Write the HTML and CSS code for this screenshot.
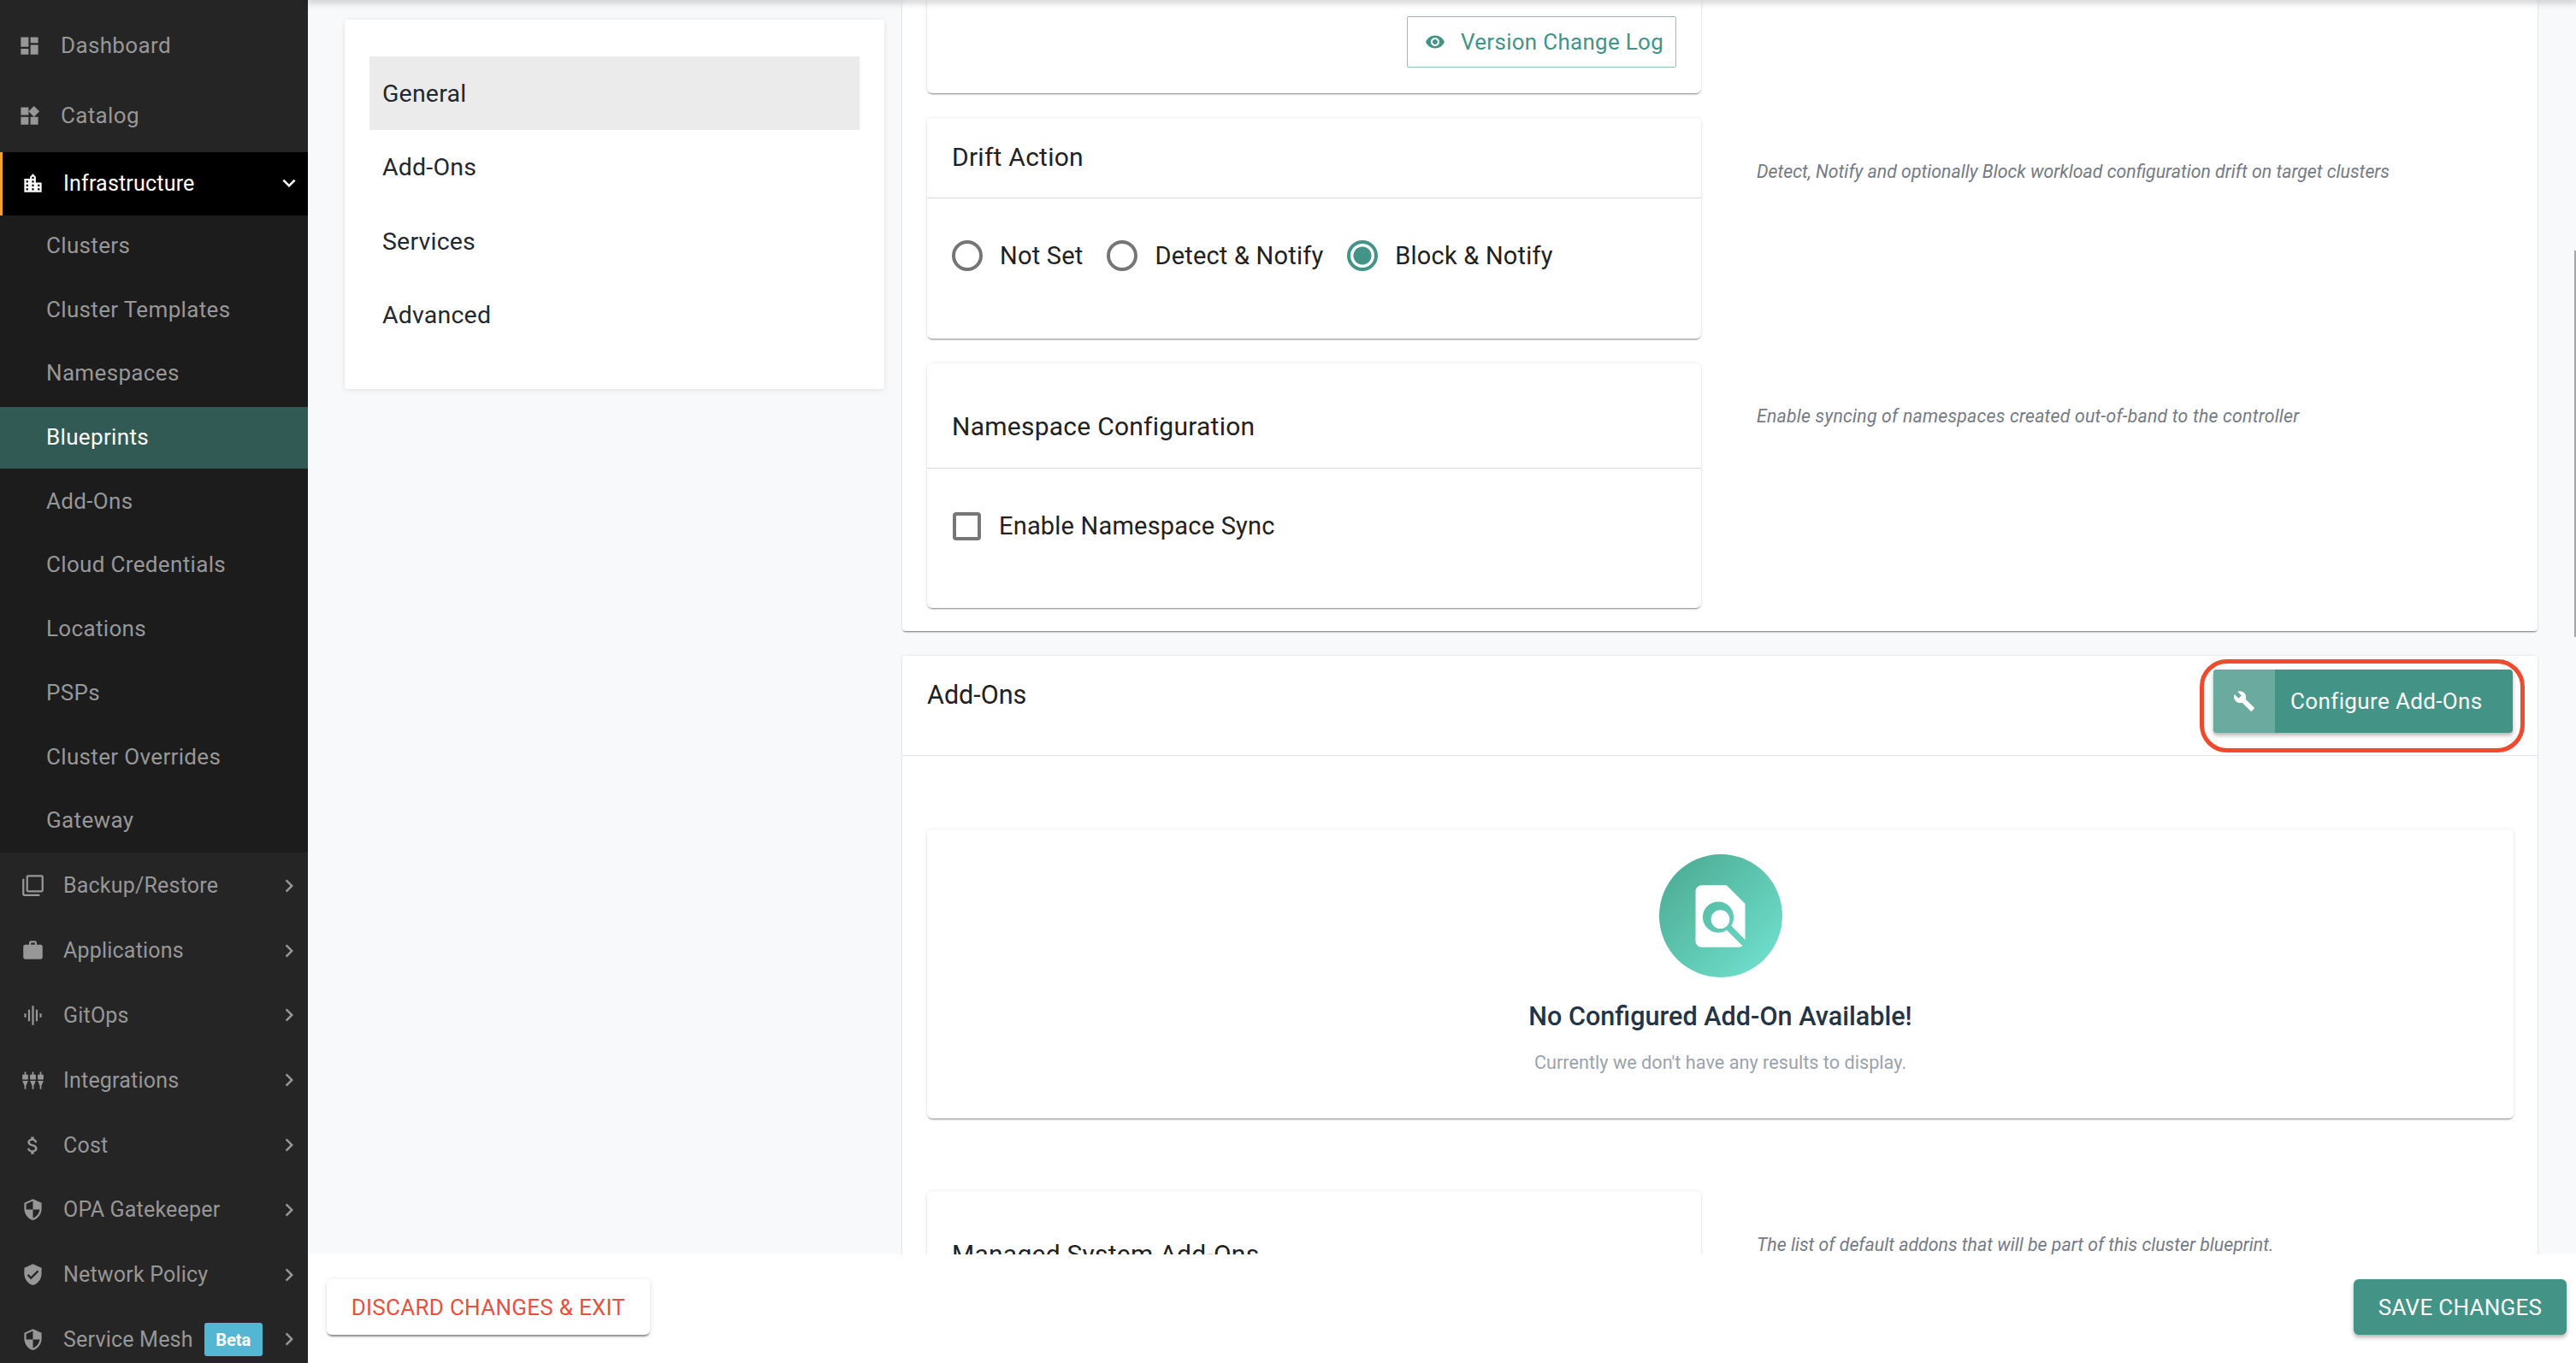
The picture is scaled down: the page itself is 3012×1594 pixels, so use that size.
FILE: index.html
```html
<!DOCTYPE html>
<html>
<head>
    <title>Blueprint Settings</title>
    <link rel="stylesheet" href="styles.css">
</head>
<body>
<svg class="defs">
    <symbol id="chevron-right" viewBox="0 0 24 24"><path d="M10 6L8.59 7.41 13.17 12l-4.58 4.59L10 18l6-6z"/></symbol>
    <symbol id="chevron-down" viewBox="0 0 24 24"><path d="M16.59 8.59L12 13.17 7.41 8.59 6 10l6 6 6-6z"/></symbol>
    <symbol id="shield-half" viewBox="0 0 24 24"><path d="M12 1L3 5v6c0 5.55 3.84 10.74 9 12 5.16-1.26 9-6.45 9-12V5l-9-4zm0 10.99h7c-.53 4.12-3.28 7.79-7 8.94V12H5V6.3l7-3.11v8.8z"/></symbol>
</svg>

<nav class="sidebar">
    <a class="nav-item nav-item-tall nav-item-first">
        <svg class="nav-icon" viewBox="0 0 24 24"><path d="M3 13h8V3H3v10zm0 8h8v-6H3v6zm10 0h8V11h-8v10zm0-18v6h8V3h-8z"/></svg>
        <span>Dashboard</span>
    </a>
    <a class="nav-item nav-item-tall nav-item-first">
        <svg class="nav-icon" viewBox="0 0 24 24"><path d="M13 13v8h8v-8h-8zM3 21h8v-8H3v8zM3 3v8h8V3H3zm13.66-1.31L11 7.34 16.66 13l5.66-5.66-5.66-5.65z"/></svg>
        <span>Catalog</span>
    </a>
    <a class="nav-item nav-item-open">
        <svg class="nav-icon" viewBox="0 0 24 24"><path d="M15 11V5l-3-3-3 3v2H3v14h18V11h-6zm-8 8H5v-2h2v2zm0-4H5v-2h2v2zm0-4H5V9h2v2zm6 8h-2v-2h2v2zm0-4h-2v-2h2v2zm0-4h-2V9h2v2zm0-4h-2V5h2v2zm6 12h-2v-2h2v2zm0-4h-2v-2h2v2z"/></svg>
        <span>Infrastructure</span>
        <svg class="nav-chevron"><use href="#chevron-down"/></svg>
    </a>
    <div class="subnav">
        <a class="subnav-item">Clusters</a>
        <a class="subnav-item">Cluster Templates</a>
        <a class="subnav-item">Namespaces</a>
        <a class="subnav-item subnav-item-active">Blueprints</a>
        <a class="subnav-item">Add-Ons</a>
        <a class="subnav-item">Cloud Credentials</a>
        <a class="subnav-item">Locations</a>
        <a class="subnav-item">PSPs</a>
        <a class="subnav-item">Cluster Overrides</a>
        <a class="subnav-item">Gateway</a>
    </div>
    <a class="nav-item">
        <svg class="nav-icon" viewBox="0 0 24 24"><path d="M3 5H1v16c0 1.1.9 2 2 2h16v-2H3V5zm18-4H7c-1.1 0-2 .9-2 2v14c0 1.1.9 2 2 2h14c1.1 0 2-.9 2-2V3c0-1.1-.9-2-2-2zm0 16H7V3h14v14z"/></svg>
        <span>Backup/Restore</span>
        <svg class="nav-chevron"><use href="#chevron-right"/></svg>
    </a>
    <a class="nav-item">
        <svg class="nav-icon" viewBox="0 0 24 24"><path d="M20 6h-4V4c0-1.1-.9-2-2-2h-4c-1.1 0-2 .9-2 2v2H4c-1.1 0-2 .9-2 2v11c0 1.1.9 2 2 2h16c1.1 0 2-.9 2-2V8c0-1.1-.9-2-2-2zm-6 0h-4V4h4v2z"/></svg>
        <span>Applications</span>
        <svg class="nav-chevron"><use href="#chevron-right"/></svg>
    </a>
    <a class="nav-item">
        <svg class="nav-icon" viewBox="0 0 24 24"><path d="M7 18h2V6H7v12zm4 4h2V2h-2v20zm-8-8h2v-4H3v4zm12 4h2V6h-2v12zm4-8v4h2v-4h-2z"/></svg>
        <span>GitOps</span>
        <svg class="nav-chevron"><use href="#chevron-right"/></svg>
    </a>
    <a class="nav-item">
        <svg class="nav-icon" viewBox="0 0 24 24"><path d="M3.2 3h1.6v3H7v5H1V6h2.200zM1 12.500h6l-2.200 5V21H3.200v-3.500zM11.200 3h1.600v3H15v5H9V6h2.200zM9 12.500h6l-2.200 5V21h-1.600v-3.500zM19.200 3h1.600v3H23v5h-6V6h2.200zM17 12.500h6l-2.200 5V21h-1.600v-3.500z"/></svg>
        <span>Integrations</span>
        <svg class="nav-chevron"><use href="#chevron-right"/></svg>
    </a>
    <a class="nav-item">
        <svg class="nav-icon" viewBox="0 0 24 24"><path d="M11.800 10.900c-2.270-.590-3-1.200-3-2.150 0-1.090 1.010-1.850 2.700-1.850 1.780 0 2.440.850 2.500 2.100h2.210c-.070-1.720-1.120-3.300-3.210-3.810V3h-3v2.160c-1.940.420-3.500 1.680-3.500 3.610 0 2.310 1.910 3.460 4.700 4.130 2.500.600 3 1.480 3 2.410 0 .690-.490 1.790-2.700 1.790-2.060 0-2.870-.920-2.980-2.100h-2.200c.120 2.190 1.760 3.420 3.680 3.830V21h3v-2.150c1.950-.370 3.500-1.500 3.500-3.550 0-2.840-2.430-3.810-4.700-4.400z"/></svg>
        <span>Cost</span>
        <svg class="nav-chevron"><use href="#chevron-right"/></svg>
    </a>
    <a class="nav-item">
        <svg class="nav-icon"><use href="#shield-half"/></svg>
        <span>OPA Gatekeeper</span>
        <svg class="nav-chevron"><use href="#chevron-right"/></svg>
    </a>
    <a class="nav-item">
        <svg class="nav-icon" viewBox="0 0 24 24"><path d="M12 1L3 5v6c0 5.550 3.840 10.740 9 12 5.160-1.260 9-6.450 9-12V5l-9-4zm-2 16l-4-4 1.410-1.410L10 14.170l6.590-6.590L18 9l-8 8z"/></svg>
        <span>Network Policy</span>
        <svg class="nav-chevron"><use href="#chevron-right"/></svg>
    </a>
    <a class="nav-item">
        <svg class="nav-icon"><use href="#shield-half"/></svg>
        <span>Service Mesh</span>
        <span class="badge">Beta</span>
        <svg class="nav-chevron"><use href="#chevron-right"/></svg>
    </a>
</nav>

<div class="main">
    <div class="top-shadow"></div>
    <div class="content">
        <div class="tabs-card">
            <div class="tab tab-active">General</div>
            <div class="tab">Add-Ons</div>
            <div class="tab">Services</div>
            <div class="tab">Advanced</div>
        </div>

        <div class="panels">
            <section class="panel panel-settings">
                <div class="setting-row">
                    <div class="card card-version">
                        <a class="log-btn">
                            <svg class="log-icon" viewBox="0 0 24 24"><path d="M12 4.500C7 4.500 2.730 7.610 1 12c1.730 4.390 6 7.500 11 7.500s9.270-3.110 11-7.500c-1.730-4.390-6-7.500-11-7.500zM12 17c-2.760 0-5-2.240-5-5s2.240-5 5-5 5 2.240 5 5-2.240 5-5 5zm0-8c-1.660 0-3 1.340-3 3s1.340 3 3 3 3-1.340 3-3-1.340-3-3-3z"/></svg>
                            Version Change Log
                        </a>
                    </div>
                </div>

                <div class="setting-row">
                    <div class="card card-drift">
                        <div class="card-head card-head-short">Drift Action</div>
                        <div class="card-body">
                            <label class="choice"><span class="radio"></span>Not Set</label>
                            <label class="choice"><span class="radio"></span>Detect &amp; Notify</label>
                            <label class="choice"><span class="radio radio-on"></span>Block &amp; Notify</label>
                        </div>
                    </div>
                    <p class="note">Detect, Notify and optionally Block workload configuration drift on target clusters</p>
                </div>

                <div class="setting-row">
                    <div class="card card-namespace">
                        <div class="card-head">Namespace Configuration</div>
                        <div class="card-body">
                            <label class="choice"><span class="checkbox"></span>Enable Namespace Sync</label>
                        </div>
                    </div>
                    <p class="note note-wide">Enable syncing of namespaces created out-of-band to the controller</p>
                </div>
            </section>

            <section class="panel panel-addons">
                <div class="addons-head">
                    <h2 class="addons-title">Add-Ons</h2>
                    <div class="configure-wrap">
                        <a class="configure-btn">
                            <span class="configure-icon">
                                <svg viewBox="0 0 24 24"><path d="M22.700 19l-9.100-9.100c.9-2.300.4-5-1.500-6.900-2-2-5-2.400-7.400-1.300L9 6 6 9 1.600 4.700C.4 7.100.9 10.100 2.900 12.100c1.900 1.900 4.600 2.400 6.900 1.500l9.100 9.100c.4.4 1 .4 1.400 0l2.300-2.300c.5-.4.5-1.100.1-1.400z"/></svg>
                            </span>
                            <span class="configure-label">Configure Add-Ons</span>
                        </a>
                        <div class="highlight"></div>
                    </div>
                </div>

                <div class="card empty-card">
                    <div class="empty-circle">
                        <svg viewBox="0 0 24 24"><path d="M20 19.590V8l-6-6H6c-1.100 0-1.990.9-1.990 2L4 20c0 1.100.89 2 1.990 2H18c.45 0 .85-.15 1.190-.4l-5.110-5.110c-.8.52-1.740.81-2.750.81-2.760 0-5-2.240-5-5s2.240-5 5-5 5 2.240 5 5c0 1.010-.29 1.950-.81 2.750L20 19.590zM9 13c0 1.660 1.340 3 3 3s3-1.340 3-3-1.340-3-3-3-3 1.340-3 3z"/></svg>
                    </div>
                    <div class="empty-title">No Configured Add-On Available!</div>
                    <div class="empty-text">Currently we don't have any results to display.</div>
                </div>

                <div class="setting-row">
                    <div class="card card-namespace">
                        <div class="card-head">Managed System Add-Ons</div>
                    </div>
                    <p class="note">The list of default addons that will be part of this cluster blueprint.</p>
                </div>
            </section>
        </div>
    </div>

    <div class="footer">
        <button class="btn btn-discard">DISCARD CHANGES &amp; EXIT</button>
        <button class="btn btn-save">SAVE CHANGES</button>
    </div>
</div>

<div class="scrollbar"></div>
</body>
</html>
```

FILE: styles.css
```css
* {
    box-sizing: border-box;
}

html, body {
    height: 100%;
}

body {
    margin: 0;
    display: flex;
    height: 100vh;
    overflow: hidden;
    font-family: Roboto, "Liberation Sans", sans-serif;
    background-color: #f8f9fb;
    color: #212121;
}

.defs {
    display: none;
}

/* sidebar */
.sidebar {
    width: 360px;
    flex-shrink: 0;
    height: 100%;
    padding-top: 12px;
    overflow: hidden;
    background-color: #252525;
    color: #979797;
    font-size: 25px;
    letter-spacing: 0.2px;
}

.nav-item {
    display: flex;
    align-items: center;
    height: 75.8px;
    padding: 2px 7px 0 25px;
}

.nav-item-tall {
    height: 82px;
    padding-top: 0;
    font-size: 26px;
    letter-spacing: 0.35px;
}

.nav-item-first {
    padding-left: 21px;
}

.nav-item-first .nav-icon {
    margin-right: 23px;
}

.nav-item-open {
    height: 74px;
    margin-top: 2px;
    padding-top: 0;
    padding-bottom: 2px;
    background-color: #000;
    box-shadow: inset 3px 0 0 #f5a033;
    color: #fff;
}

.nav-icon {
    width: 27px;
    height: 27px;
    flex-shrink: 0;
    margin-right: 22px;
    fill: currentColor;
}

.nav-chevron {
    width: 30px;
    height: 30px;
    flex-shrink: 0;
    margin-left: auto;
    fill: currentColor;
}

.badge {
    margin-left: 13px;
    width: 68px;
    height: 39px;
    line-height: 40px;
    text-align: center;
    background-color: #53b7d3;
    border-radius: 3px;
    color: #fff;
    font-size: 20px;
    font-weight: 700;
    letter-spacing: 0;
}

.subnav {
    display: flex;
    flex-direction: column;
    gap: 2.7px;
    height: 745px;
    background-color: #1c1c1c;
    font-size: 26px;
    letter-spacing: 0.34px;
}

.subnav-item {
    display: flex;
    align-items: center;
    height: 72px;
    padding: 0 0 2px 54px;
    flex-shrink: 0;
}

.subnav-item-active {
    background-color: #315a54;
    color: #fff;
}

/* main area */
.main {
    flex: 1;
    min-width: 0;
    display: flex;
    flex-direction: column;
    height: 100%;
}

.top-shadow {
    position: relative;
    z-index: 2;
    height: 0;
    box-shadow: 0 0 9px 2px rgba(0, 0, 0, 0.35);
}

.content {
    flex: 1;
    min-height: 0;
    overflow: hidden;
    display: flex;
    align-items: flex-start;
    gap: 21px;
    padding-left: 43px;
}

.tabs-card {
    width: 631px;
    height: 432px;
    flex-shrink: 0;
    margin-top: 23px;
    padding: 43px 29px 0;
    background-color: #fff;
    border-radius: 4px;
    box-shadow: 0 1px 6px rgba(0, 0, 0, 0.1);
}

.tab {
    height: 86.4px;
    line-height: 88px;
    padding-left: 15px;
    font-size: 28.500px;
    letter-spacing: 0.2px;
    color: #24282e;
}

.tab-active {
    background-color: #ebebeb;
}

.panels {
    width: 1912px;
    flex-shrink: 0;
}

.panel {
    background-color: #fff;
    padding: 0 28px 0 29px;
    border-radius: 4px;
    box-shadow: 0 2px 2px -1px rgba(0, 0, 0, 0.5), 0 0 3px rgba(0, 0, 0, 0.12);
}

.panel-settings {
    height: 738px;
    margin-bottom: 29px;
}

.setting-row {
    display: flex;
    align-items: flex-start;
    margin-bottom: 29px;
}

.card {
    width: 905px;
    flex-shrink: 0;
    background-color: #fff;
    border-radius: 6px;
    box-shadow: 0 2px 2px -1px rgba(0, 0, 0, 0.45), 0 0 4px rgba(0, 0, 0, 0.1);
}

.card-version {
    height: 109px;
    padding: 19px 29px 0 0;
    display: flex;
    justify-content: flex-end;
    align-items: flex-start;
    border-radius: 0 0 6px 6px;
}

.log-btn {
    display: flex;
    align-items: center;
    width: 315px;
    height: 60px;
    padding-left: 20px;
    border: 1px solid #8fc4ba;
    border-radius: 2px;
    color: #439486;
    font-size: 26px;
    letter-spacing: 0.28px;
}

.log-icon {
    width: 24px;
    height: 24px;
    margin-right: 18px;
    fill: #439486;
}

.card-drift {
    height: 258px;
}

.card-namespace {
    height: 286px;
}

.card-head {
    display: flex;
    align-items: flex-end;
    height: 123px;
    padding: 0 29px 30px;
    border-bottom: 1px solid #d9d9d9;
    font-size: 30px;
    line-height: 36px;
    letter-spacing: 0.25px;
}

.card-head-short {
    height: 94px;
    padding-bottom: 29px;
}

.card-body {
    display: flex;
    align-items: center;
    padding: 49px 29px 0;
}

.choice {
    display: flex;
    align-items: center;
    height: 36px;
    margin-right: 28px;
    font-size: 29px;
    letter-spacing: 0.2px;
}

.radio {
    width: 36px;
    height: 36px;
    flex-shrink: 0;
    margin-right: 20px;
    border: 4px solid #757575;
    border-radius: 50%;
}

.radio-on {
    border-color: #439486;
    background: radial-gradient(circle, #439486 0 10px, #fff 11px);
}

.checkbox {
    width: 33px;
    height: 33px;
    flex-shrink: 0;
    margin: 0 21px 0 1px;
    border: 4px solid #777;
    border-radius: 4px;
}

.note {
    margin: 50px 0 0 65px;
    font-size: 21.300px;
    line-height: 26px;
    font-style: italic;
    color: #747b86;
}

.note-wide {
    margin-top: 49px;
    letter-spacing: 0.2px;
}

.addons-head {
    display: flex;
    justify-content: space-between;
    align-items: flex-start;
    height: 117px;
    margin: 0 -28px 86px -29px;
    padding: 16px 29px 0;
    border-bottom: 1px solid #e3e3e3;
}

.addons-title {
    margin: 12px 0 0;
    font-size: 30.500px;
    font-weight: 400;
    line-height: 36px;
}

.configure-wrap {
    position: relative;
}

.configure-btn {
    display: flex;
    width: 350px;
    height: 74px;
    border-radius: 4px;
    overflow: hidden;
    background-color: #439486;
    color: #fff;
    font-size: 26px;
    letter-spacing: 0.37px;
    box-shadow: 0 3px 5px rgba(0, 0, 0, 0.3);
}

.configure-icon {
    display: flex;
    align-items: center;
    justify-content: center;
    width: 72px;
    background-color: #6aaa9f;
}

.configure-icon svg {
    width: 26px;
    height: 26px;
    fill: #fff;
}

.configure-label {
    align-self: center;
    margin: -1px 0 0 18px;
}

.highlight {
    position: absolute;
    top: -12px;
    bottom: -23px;
    left: -16px;
    right: -14px;
    border: 5px solid #ee4a2b;
    border-radius: 32px;
}

.empty-card {
    width: 1855px;
    height: 338px;
    margin-bottom: 85px;
    padding-top: 29px;
    text-align: center;
}

.empty-circle {
    display: flex;
    align-items: center;
    justify-content: center;
    width: 144px;
    height: 144px;
    margin: 0 auto;
    border-radius: 50%;
    background: linear-gradient(135deg, #4aa78f, #72e5d2);
}

.empty-circle svg {
    width: 87px;
    height: 87px;
    fill: #fff;
}

.empty-title {
    margin-top: 26px;
    font-size: 30.600px;
    line-height: 40px;
    font-weight: 500;
    color: #243447;
}

.empty-text {
    margin-top: 18px;
    font-size: 21.700px;
    line-height: 32px;
    color: #9aa3ad;
}

/* footer */
.footer {
    position: relative;
    z-index: 1;
    display: flex;
    justify-content: space-between;
    align-items: flex-start;
    height: 127px;
    flex-shrink: 0;
    padding: 29px 11px 0 22px;
    background-color: #fff;
}

.btn {
    height: 65px;
    padding: 0;
    border: none;
    border-radius: 6px;
    font-family: inherit;
    font-size: 26px;
    letter-spacing: 0.28px;
}

.btn-discard {
    width: 378px;
    background-color: #fff;
    color: #e8513f;
    box-shadow: 0 3px 2px -1px rgba(0, 0, 0, 0.4), 0 1px 6px rgba(0, 0, 0, 0.12);
}

.btn-save {
    width: 249px;
    background-color: #439486;
    color: #fff;
    box-shadow: 0 3px 5px rgba(0, 0, 0, 0.3);
}

.scrollbar {
    position: absolute;
    top: 293px;
    right: 0;
    width: 2px;
    height: 452px;
    background-color: #a5a5a5;
}
```
